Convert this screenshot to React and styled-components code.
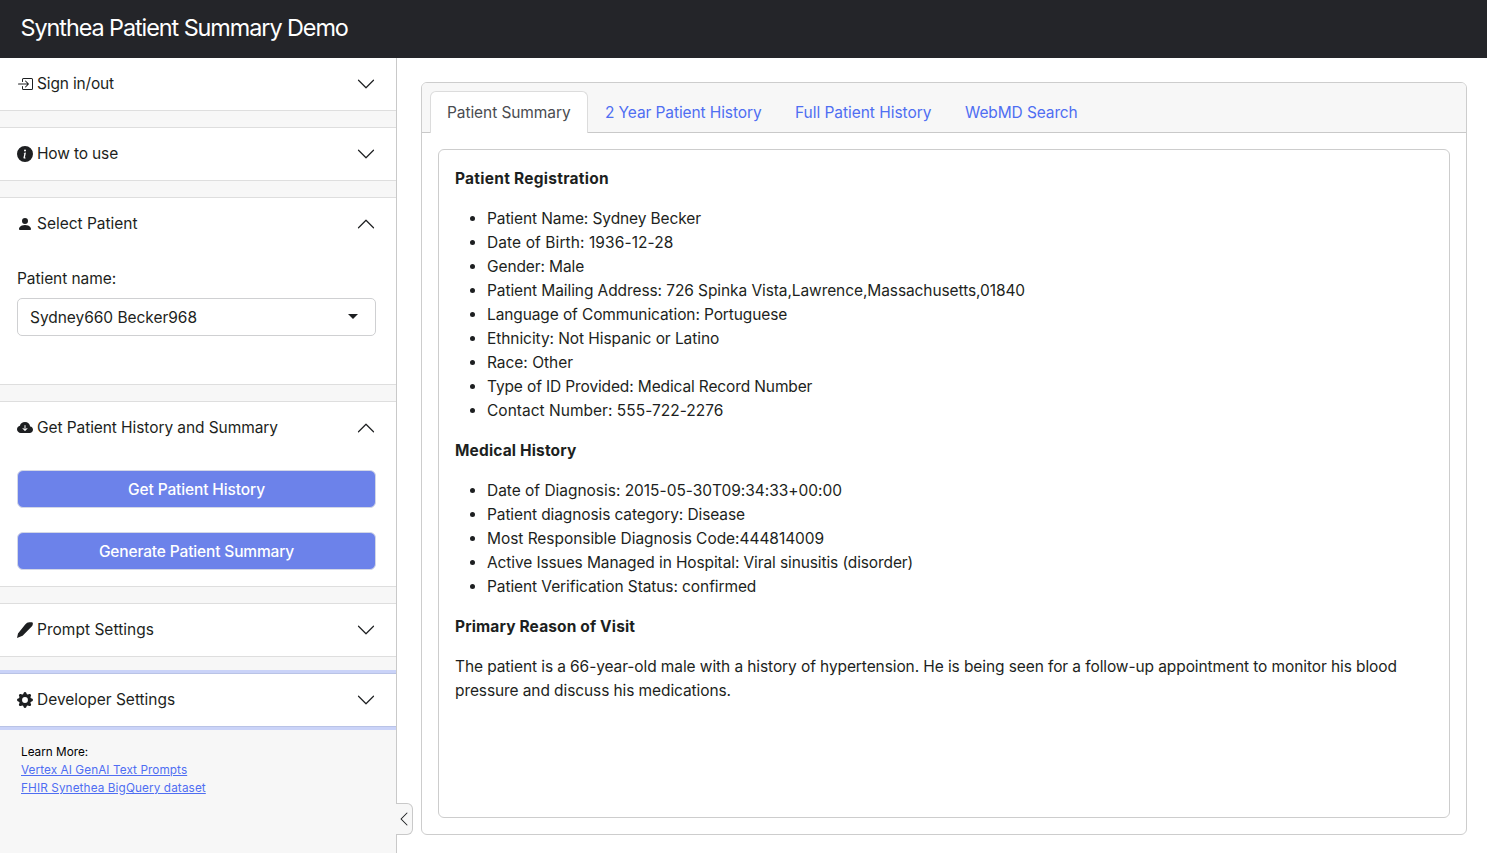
import React from 'react';
import styled, { createGlobalStyle } from 'styled-components';
import {
  BsBoxArrowInRight,
  BsInfoCircleFill,
  BsPersonFill,
  BsCloudArrowDownFill,
  BsGearFill,
} from 'react-icons/bs';

const GlobalStyle = createGlobalStyle`
  *, *::before, *::after { box-sizing: border-box; }
  body {
    margin: 0;
    background: #fff;
    color: #1d1f21;
    font: 400 15.5px/24px Inter, "Liberation Sans", sans-serif;
    overflow: hidden;
  }
`;

const Page = styled.div`
  display: flex;
  flex-direction: column;
  height: 100vh;
`;

const Header = styled.header`
  flex: none;
  height: 58px;
  padding: 13px 20.5px 0;
  background: #242529;
  color: #fff;
`;

const Title = styled.h1`
  margin: 0;
  font-size: 23.4px;
  font-weight: 400;
  line-height: 29px;
  letter-spacing: -1.06px;
`;

const Layout = styled.div`
  flex: 1;
  min-height: 0;
  display: flex;
`;

const Sidebar = styled.aside`
  position: relative;
  flex: none;
  width: 397px;
  border-right: 1px solid #c9c9c9;
  background: #f7f7f7;
`;

const Sections = styled.div`
  display: flex;
  flex-direction: column;
  gap: 16px;
`;

const Section = styled.section`
  height: ${(p) => p.$height}px;
  border-top: ${(p) => (p.$first ? 'none' : '1px solid')};
  border-bottom: 1px solid;
  border-color: ${(p) => (p.$focused ? '#b9c3e6' : '#dedede')};
  background: #fff;
  box-shadow: ${(p) => (p.$focused ? '0 -3px 0 #cad3f8, 0 3px 0 #cad3f8' : 'none')};
`;

const SectionHeader = styled.div`
  display: flex;
  align-items: center;
  height: 52px;
  padding: 0 20px 0 17px;

  > svg:first-child {
    flex: none;
    width: 16px;
    height: 16px;
    margin-right: 4px;
  }
`;

const Label = styled.span`
  flex: 1;
  position: relative;
  top: -0.5px;
  letter-spacing: ${(p) => p.$track}px;
`;

const ChevronIcon = styled.svg`
  flex: none;
  width: 20px;
  height: 20px;
  transform: ${(p) => (p.$open ? 'rotate(180deg)' : 'none')};
`;

const SectionBody = styled.div`
  display: flex;
  flex-direction: column;
  padding: 16px 20px 0 17px;
`;

const FieldLabel = styled.label`
  padding-top: 1px;
  margin-bottom: 7px;
  letter-spacing: -0.07px;
`;

const SelectBox = styled.div`
  display: flex;
  align-items: center;
  justify-content: space-between;
  height: 38px;
  padding: 2px 17px 0 12px;
  border: 1px solid #cfd0d2;
  border-radius: 5px;
  letter-spacing: -0.04px;
`;

const Caret = styled.span`
  border: 5px solid transparent;
  border-top-color: #1d1f21;
  border-bottom: 0;
  margin-top: -4px;
`;

const ActionButton = styled.button`
  height: 38px;
  margin-bottom: 24px;
  padding: 1px 0 0;
  border: 1px solid #d3d7e6;
  border-radius: 6px;
  background: #6c82ea;
  color: #fff;
  font: inherit;
  font-weight: 500;
  letter-spacing: ${(p) => p.$track}px;
`;

const LearnMore = styled.div`
  display: flex;
  flex-direction: column;
  align-items: flex-start;
  padding: 16px 21px;
  color: #000;
  font-size: 11.75px;
  line-height: 18px;
`;

const LearnLink = styled.a`
  color: #4f6ef2;
  text-decoration: underline;
  letter-spacing: ${(p) => p.$track}px;
`;

const CollapseToggle = styled.button`
  position: absolute;
  left: 396px;
  bottom: 18px;
  display: flex;
  align-items: center;
  justify-content: center;
  width: 17px;
  height: 32px;
  padding: 0;
  border: 1px solid #c9c9c9;
  border-left: 0;
  border-radius: 0 6px 6px 0;
  background: #f7f7f7;
`;

const Main = styled.main`
  flex: 1;
  min-width: 0;
  display: flex;
  padding: 24px 20px 18px 24px;
`;

const Card = styled.div`
  flex: 1;
  display: flex;
  flex-direction: column;
  border: 1px solid #cdcdcd;
  border-radius: 6px;
`;

const TabBar = styled.nav`
  display: flex;
  height: 50px;
  padding: 8px 8px 0;
  border-bottom: 1px solid #c9c9c9;
  border-radius: 5px 5px 0 0;
  background: #f7f7f7;
`;

const Tab = styled.a`
  width: ${(p) => p.$width}px;
  height: 42px;
  padding: 9px 0 0 16px;
  border: 1px solid ${(p) => (p.$active ? '#dcdcdc' : 'transparent')};
  border-bottom: 0;
  border-radius: 6px 6px 0 0;
  background: ${(p) => (p.$active ? '#fff' : 'transparent')};
  color: ${(p) => (p.$active ? '#4a4c51' : '#4f6ef2')};
  letter-spacing: ${(p) => p.$track}px;
  white-space: nowrap;
`;

const Summary = styled.article`
  flex: 1;
  margin: 16px;
  padding: 17px 16px 16px;
  border: 1px solid #cdcdcd;
  border-radius: 6px;
  letter-spacing: -0.095px;
`;

const Heading = styled.h2`
  margin: 0 0 16px;
  font-size: 15.5px;
  font-weight: 700;
  line-height: 24px;
  letter-spacing: ${(p) => p.$track}px;
`;

const List = styled.ul`
  margin: 0 0 16px;
  padding-left: 32px;
`;

const Item = styled.li`
  letter-spacing: ${(p) => p.$track}px;
`;

const Paragraph = styled.p`
  margin: 0;
`;

const PenIcon = () => (
  <svg viewBox="0 0 16 16" fill="currentColor">
    <path d="M0 16l1-4.6L8.2 2.6Q10 .2 12.3.2h2.4q1.2 0 1.2 1.2 0 2-1.2 3.2L5.6 13.7z" />
  </svg>
);

const Chevron = ({ open }) => (
  <ChevronIcon
    $open={open}
    viewBox="0 0 16 16"
    fill="none"
    stroke="#1d1f21"
    strokeWidth="0.95"
    strokeLinecap="round"
    strokeLinejoin="round"
  >
    <path d="m2 5 6 6 6-6" />
  </ChevronIcon>
);

const Panel = ({ icon, label, track, open, children, ...box }) => (
  <Section {...box}>
    <SectionHeader>
      {icon}
      <Label $track={track}>{label}</Label>
      <Chevron open={open} />
    </SectionHeader>
    {children}
  </Section>
);

const registration = [
  ['Patient Name: Sydney Becker', -0.1],
  ['Date of Birth: 1936-12-28', 0.09],
  ['Gender: Male', -0.11],
  ['Patient Mailing Address: 726 Spinka Vista,Lawrence,Massachusetts,01840', -0.09],
  ['Language of Communication: Portuguese', -0.11],
  ['Ethnicity: Not Hispanic or Latino', -0.07],
  ['Race: Other', -0.03],
  ['Type of ID Provided: Medical Record Number', -0.13],
  ['Contact Number: 555-722-2276', 0.02],
];

const history = [
  ['Date of Diagnosis: 2015-05-30T09:34:33+00:00', -0.025],
  ['Patient diagnosis category: Disease', -0.11],
  ['Most Responsible Diagnosis Code:444814009', -0.05],
  ['Active Issues Managed in Hospital: Viral sinusitis (disorder)', -0.11],
  ['Patient Verification Status: confirmed', -0.09],
];

const Items = ({ rows }) => (
  <List>
    {rows.map(([text, track]) => (
      <Item key={text} $track={track}>{text}</Item>
    ))}
  </List>
);

export default function App() {
  return (
    <Page>
      <GlobalStyle />
      <Header>
        <Title>Synthea Patient Summary Demo</Title>
      </Header>
      <Layout>
        <Sidebar>
          <Sections>
            <Panel icon={<BsBoxArrowInRight />} label="Sign in/out" track={-0.16} $height={53} $first />
            <Panel icon={<BsInfoCircleFill />} label="How to use" track={-0.15} $height={54} />
            <Panel icon={<BsPersonFill />} label="Select Patient" track={-0.02} $height={188} open>
              <SectionBody>
                <FieldLabel>Patient name:</FieldLabel>
                <SelectBox>
                  Sydney660 Becker968
                  <Caret />
                </SelectBox>
              </SectionBody>
            </Panel>
            <Panel icon={<BsCloudArrowDownFill />} label="Get Patient History and Summary" track={-0.08} $height={186} open>
              <SectionBody>
                <ActionButton $track={-0.12}>Get Patient History</ActionButton>
                <ActionButton $track={-0.15}>Generate Patient Summary</ActionButton>
              </SectionBody>
            </Panel>
            <Panel icon={<PenIcon />} label="Prompt Settings" track={0.02} $height={54} />
            <Panel icon={<BsGearFill />} label="Developer Settings" track={-0.02} $height={54} $focused />
          </Sections>
          <LearnMore>
            <span>Learn More:</span>
            <LearnLink $track={0.08}>Vertex AI GenAI Text Prompts</LearnLink>
            <LearnLink $track={0.11}>FHIR Synethea BigQuery dataset</LearnLink>
          </LearnMore>
          <CollapseToggle aria-label="Toggle sidebar">
            <svg width="16" height="16" viewBox="0 0 16 16" fill="#1d1f21">
              <path d="M11.354 1.646a.5.5 0 0 1 0 .708L5.707 8l5.647 5.646a.5.5 0 0 1-.708.708l-6-6a.5.5 0 0 1 0-.708l6-6a.5.5 0 0 1 .708 0z" />
            </svg>
          </CollapseToggle>
        </Sidebar>
        <Main>
          <Card>
            <TabBar>
              <Tab $active $width={158} $track={-0.08}>Patient Summary</Tab>
              <Tab $width={190} $track={-0.1}>2 Year Patient History</Tab>
              <Tab $width={170} $track={-0.04}>Full Patient History</Tab>
              <Tab $width={146} $track={-0.11}>WebMD Search</Tab>
            </TabBar>
            <Summary>
              <Heading $track={0.26}>Patient Registration</Heading>
              <Items rows={registration} />
              <Heading $track={0.15}>Medical History</Heading>
              <Items rows={history} />
              <Heading $track={0.14}>Primary Reason of Visit</Heading>
              <Paragraph>
                The patient is a 66-year-old male with a history of hypertension. He is being seen for a follow-up
                appointment to monitor his blood pressure and discuss his medications.
              </Paragraph>
            </Summary>
          </Card>
        </Main>
      </Layout>
    </Page>
  );
}
